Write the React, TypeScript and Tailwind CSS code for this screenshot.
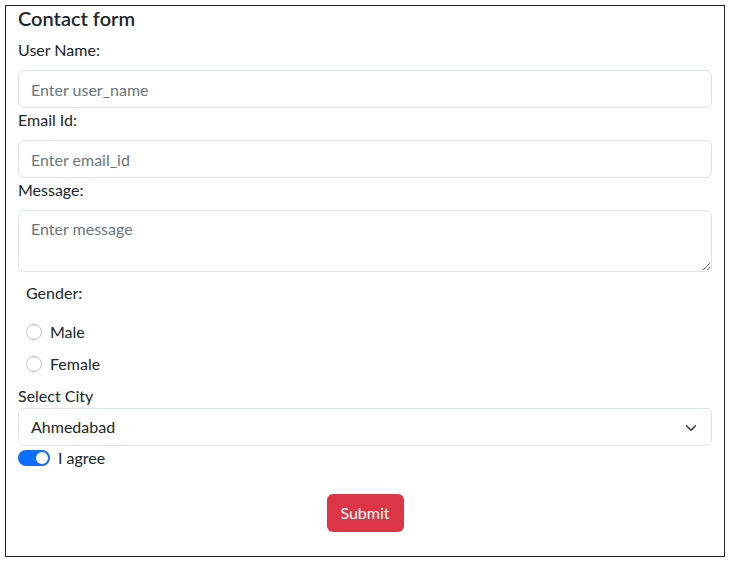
import React from "react";

export default function App() {
  return (
    <div className="bg-white w-[731px] h-[561px] pt-[5px] pl-[5px] text-[#212529] font-['Lato','Liberation_Sans',sans-serif]">
      <div className="w-[720px] h-[552px] border border-[#222] px-3">
        <h5 className="text-[20px] leading-[24px] font-semibold mb-2 mt-0">Contact form</h5>
        <label className="block text-[16px] leading-[24px] mb-2">User Name:</label>
        <input
          className="block w-full h-[38px] border border-[#dee2e6] rounded-[6px] px-3 text-[16px] placeholder:text-[#6c757d] outline-none"
          placeholder="Enter user_name"
        />
        <label className="block text-[16px] leading-[24px] mb-2">Email Id:</label>
        <input
          className="block w-full h-[38px] border border-[#dee2e6] rounded-[6px] px-3 text-[16px] placeholder:text-[#6c757d] outline-none"
          placeholder="Enter email_id"
        />
        <label className="block text-[16px] leading-[24px] mb-2">Message:</label>
        <textarea
          rows={2}
          className="block w-full h-[62px] border border-[#dee2e6] rounded-[6px] px-3 py-[6px] text-[16px] leading-[24px] placeholder:text-[#6c757d] outline-none resize-y"
          placeholder="Enter message"
        />
        <div className="pl-2 mt-[9px] text-[16px] leading-[24px]">Gender:</div>
        <div className="pl-2 mt-[15px] flex flex-col gap-2">
          <label className="flex items-center gap-2 text-[16px] leading-[24px]">
            <span className="w-4 h-4 rounded-full border border-[#bfbfbf] bg-white" />
            Male
          </label>
          <label className="flex items-center gap-2 text-[16px] leading-[24px]">
            <span className="w-4 h-4 rounded-full border border-[#bfbfbf] bg-white" />
            Female
          </label>
        </div>
        <label className="block mt-2 text-[16px] leading-[24px]">Select City</label>
        <div className="flex items-center justify-between w-full h-[38px] border border-[#dee2e6] rounded-[6px] pl-3 pr-3 text-[16px]">
          <span>Ahmedabad</span>
          <svg width="16" height="12" viewBox="0 0 16 16" className="mt-[2px]">
            <path d="m2 5 6 6 6-6" fill="none" stroke="#343a40" strokeWidth="2" strokeLinecap="round" strokeLinejoin="round" />
          </svg>
        </div>
        <div className="flex items-center gap-2 text-[16px] leading-[24px]">
          <span className="relative w-8 h-4 rounded-full bg-[#0d6efd]">
            <span className="absolute right-[2px] top-[2px] w-3 h-3 rounded-full bg-white" />
          </span>
          I agree
        </div>
        <div className="flex justify-center mt-[24px]">
          <button className="h-[38px] w-[77px] rounded-[6px] bg-[#dc3545] text-white text-[16px]">Submit</button>
        </div>
      </div>
    </div>
  );
}
